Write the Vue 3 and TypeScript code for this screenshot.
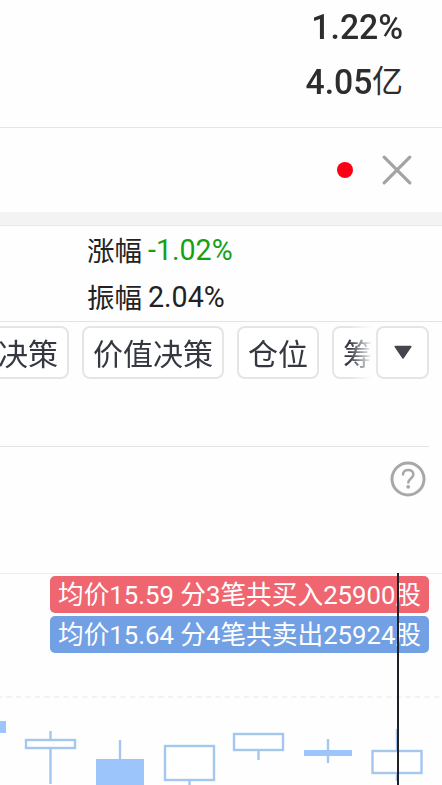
<script setup lang="ts">
interface Candle {
  x: number
  top: number
  width: number
  height: number
  high: number
  low: number
  filled: boolean
}

const rows = [
  { label: '涨幅', value: '-1.02%', tone: 'fall' },
  { label: '振幅', value: '2.04%', tone: 'plain' },
]

const trades = [
  { side: 'buy', text: '均价15.59 分3笔共买入25900股' },
  { side: 'sell', text: '均价15.64 分4笔共卖出25924股' },
]

const candles: Candle[] = [
  { x: -42, top: 147, width: 48, height: 12, high: 147, low: 159, filled: true },
  { x: 26, top: 166, width: 49, height: 8, high: 157, low: 210, filled: false },
  { x: 96, top: 185, width: 48, height: 30, high: 166, low: 216, filled: true },
  { x: 165, top: 172, width: 49, height: 34, high: 172, low: 212, filled: false },
  { x: 234, top: 160, width: 49, height: 16, high: 160, low: 186, filled: false },
  { x: 304, top: 176, width: 48, height: 6, high: 165, low: 189, filled: true },
  { x: 372.5, top: 177, width: 49, height: 22, high: 155, low: 207, filled: false },
]
</script>

<template>
  <main class="screen">
    <section class="summary">
      <div class="figure"><span class="number">1.22%</span></div>
      <div class="figure"><span class="number">4.05</span><span class="unit">亿</span></div>
    </section>

    <section class="notice">
      <i class="dot"></i>
      <svg class="close" width="30" height="30" viewBox="0 0 30 30">
        <path d="M2.2 2.2 27.8 27.8M27.8 2.2 2.2 27.8" />
      </svg>
    </section>
    <div class="divider"></div>

    <section class="quotes">
      <div v-for="row in rows" :key="row.label" class="quote">
        <span class="label">{{ row.label }}</span>
        <span :class="row.tone">{{ row.value }}</span>
      </div>
    </section>

    <nav class="tabs">
      <div class="strip">
        <button class="tab first">决策</button>
        <button class="tab value">价值决策</button>
        <button class="tab position">仓位</button>
        <button class="tab last">筹</button>
      </div>
      <button class="more">
        <svg width="20" height="16" viewBox="0 0 20 16">
          <path d="M2.2 1.5h15.6L10 13Z" />
        </svg>
      </button>
    </nav>

    <section class="help">
      <svg width="36" height="36" viewBox="0 0 36 36">
        <circle cx="18" cy="18" r="16" />
        <path d="M13 13.6c0-6.3 10.4-6.3 10.4 0 0 3.8-5.1 4-5.1 8" />
        <circle class="point" cx="18.2" cy="25.8" r="1.9" />
      </svg>
    </section>

    <section class="chart">
      <div class="trades">
        <div v-for="trade in trades" :key="trade.side" class="trade" :class="trade.side">
          <span>{{ trade.text }}</span>
        </div>
      </div>
      <svg class="plot" width="442" height="212" viewBox="0 0 442 212">
        <line class="grid" x1="-3" x2="442" y1="123" y2="123" />
        <g v-for="c in candles" :key="c.x" class="candle">
          <line :x1="c.x + c.width / 2" :x2="c.x + c.width / 2" :y1="c.high" :y2="c.low" />
          <rect
            :class="{ filled: c.filled }"
            :x="c.x"
            :y="c.top"
            :width="c.width"
            :height="c.height"
          />
        </g>
        <line class="cursor" x1="398" x2="398" y1="-1" y2="212" />
      </svg>
    </section>
  </main>
</template>

<style>
body {
  background: #fff;
}
</style>

<style scoped>
.screen {
  width: 442px;
  height: 785px;
  overflow: hidden;
  background: #fefefe;
  color: #222;
  font-family: Roboto, "Noto Sans CJK SC", sans-serif;
}
.screen * {
  box-sizing: border-box;
}
.summary {
  height: 128px;
  padding-right: 39px;
  border-bottom: 1px solid #e6e6e6;
}
.figure {
  display: flex;
  justify-content: flex-end;
  height: 54.5px;
  line-height: 56px;
  color: #2d2d2d;
}
.number {
  font-size: 35px;
  font-weight: 500;
  transform: scaleX(0.965);
  transform-origin: right;
}
.unit {
  font-size: 31px;
  line-height: 54px;
}
.notice {
  display: flex;
  align-items: center;
  justify-content: flex-end;
  gap: 29px;
  height: 84px;
  padding-right: 30px;
}
.dot {
  width: 16px;
  height: 16px;
  border-radius: 50%;
  background: #fc0014;
}
.close path {
  fill: none;
  stroke: #a3a3a3;
  stroke-width: 3.2;
  stroke-linecap: round;
}
.divider {
  height: 14px;
  background: #f3f3f3;
  border-bottom: 1px solid #e7e7e7;
}
.quotes {
  height: 96px;
  padding-left: 87px;
  border-bottom: 1px solid #e4e4e4;
}
.quote {
  display: flex;
  gap: 5px;
  height: 47px;
  font-size: 28.6px;
  line-height: 49px;
}
.label {
  width: 56px;
  font-size: 27.5px;
  line-height: 51px;
}
.fall {
  color: #16a016;
}
.tabs {
  display: flex;
  height: 125px;
  width: 429px;
  padding-top: 4px;
  border-bottom: 1px solid #e3e3e3;
}
.strip {
  display: flex;
  gap: 13px;
  width: 376px;
  height: 53px;
  overflow: hidden;
  -webkit-mask-image: linear-gradient(to right, #000 350px, transparent 372px);
  mask-image: linear-gradient(to right, #000 350px, transparent 372px);
}
.tab,
.more {
  display: flex;
  flex: none;
  align-items: center;
  justify-content: center;
  height: 53px;
  margin: 0;
  padding: 0 0 2px;
  border: 2px solid #e5e5e5;
  border-radius: 8px;
  background: #fff;
  color: #353841;
  font: 400 30px "Noto Sans CJK SC", sans-serif;
}
.more {
  padding: 0;
}
.tab.first {
  justify-content: flex-end;
  width: 89px;
  margin-left: -20px;
  padding-right: 9px;
}
.value {
  width: 142px;
}
.position {
  width: 82px;
}
.last {
  justify-content: flex-start;
  width: 82px;
  padding-left: 9px;
}
.more {
  width: 53px;
}
.more path {
  fill: #44454d;
  stroke: #44454d;
  stroke-width: 1.5;
  stroke-linejoin: round;
}
.help {
  display: flex;
  justify-content: flex-end;
  height: 127px;
  padding: 14px 16px 0 0;
  border-bottom: 1px solid #eee;
}
.help svg {
  fill: none;
  stroke: #a8a8a8;
  stroke-width: 3;
  stroke-linecap: round;
}
.help path {
  stroke-width: 2.5;
}
.help .point {
  fill: #a8a8a8;
  stroke: none;
}
.chart {
  position: relative;
  height: 212px;
}
.trades {
  display: flex;
  flex-direction: column;
  gap: 3px;
  padding: 2px 13px 0 50px;
}
.trade {
  height: 37px;
  padding-left: 8px;
  border-radius: 5px;
  color: #fff;
  font-size: 25.7px;
  line-height: 39px;
  white-space: nowrap;
}
.buy {
  background: #ef6671;
}
.sell {
  background: #72a0e5;
}
.plot {
  position: absolute;
  inset: 0;
  overflow: visible;
}
.grid {
  stroke: #eee;
  stroke-width: 1.5;
  stroke-dasharray: 5 4.5;
}
.candle line,
.candle rect {
  fill: #fff;
  stroke: #a3c7ef;
  stroke-width: 2.4;
}
.candle .filled {
  fill: #9bc5fb;
  stroke: none;
}
.cursor {
  stroke: #202126;
  stroke-width: 2;
}
</style>
